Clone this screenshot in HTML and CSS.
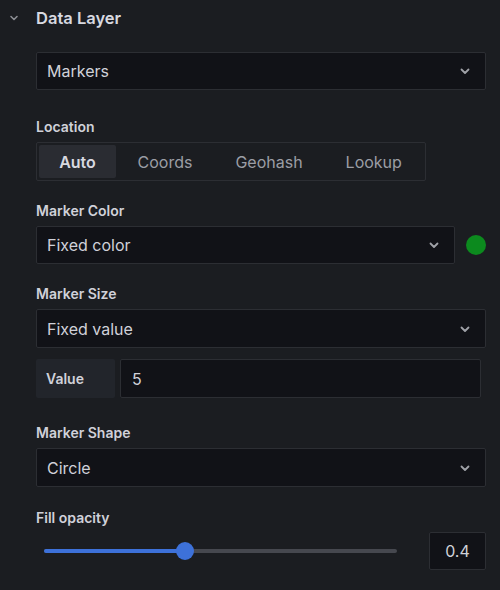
FILE: index.html
```html
<!DOCTYPE html>
<html>
<head>
<meta charset="utf-8">
<link rel="stylesheet" href="styles.css">
</head>
<body>
<div class="panel">
  <div class="header">
    <svg class="hchev" width="10" height="10" viewBox="0 0 10 10"><path d="M2 3.5 L5 6.5 L8 3.5" fill="none" stroke="#8b8d93" stroke-width="1.6" stroke-linecap="round" stroke-linejoin="round"/></svg>
    <span class="title">Data Layer</span>
  </div>
  <div class="content">
    <div class="select first">
      <span>Markers</span>
      <svg class="chev" width="12" height="12" viewBox="0 0 12 12"><path d="M2.5 4.5 L6 8 L9.5 4.5" fill="none" stroke="#a0a2a8" stroke-width="1.8" stroke-linecap="round" stroke-linejoin="round"/></svg>
    </div>

    <div class="field f-location">
      <div class="label">Location</div>
      <div class="radio">
        <div class="rb active">Auto</div>
        <div class="rb">Coords</div>
        <div class="rb">Geohash</div>
        <div class="rb">Lookup</div>
      </div>
    </div>

    <div class="field f-color">
      <div class="label">Marker Color</div>
      <div class="row">
        <div class="select grow">
          <span>Fixed color</span>
          <svg class="chev" width="12" height="12" viewBox="0 0 12 12"><path d="M2.5 4.5 L6 8 L9.5 4.5" fill="none" stroke="#a0a2a8" stroke-width="1.8" stroke-linecap="round" stroke-linejoin="round"/></svg>
        </div>
        <div class="dot"></div>
      </div>
    </div>

    <div class="field f-size">
      <div class="label">Marker Size</div>
      <div class="select tall">
        <span>Fixed value</span>
        <svg class="chev" width="12" height="12" viewBox="0 0 12 12"><path d="M2.5 4.5 L6 8 L9.5 4.5" fill="none" stroke="#a0a2a8" stroke-width="1.8" stroke-linecap="round" stroke-linejoin="round"/></svg>
      </div>
      <div class="valrow">
        <div class="vlabel">Value</div>
        <div class="vinput">5</div>
      </div>
    </div>

    <div class="field f-shape">
      <div class="label">Marker Shape</div>
      <div class="select tall">
        <span>Circle</span>
        <svg class="chev" width="12" height="12" viewBox="0 0 12 12"><path d="M2.5 4.5 L6 8 L9.5 4.5" fill="none" stroke="#a0a2a8" stroke-width="1.8" stroke-linecap="round" stroke-linejoin="round"/></svg>
      </div>
    </div>

    <div class="field f-opacity">
      <div class="label">Fill opacity</div>
      <div class="sliderrow">
        <div class="slider">
          <div class="track">
            <div class="fill" style="width:40%"></div>
            <div class="thumb" style="left:40%"></div>
          </div>
        </div>
        <div class="num">0.4</div>
      </div>
    </div>
  </div>
</div>
</body>
</html>
```

FILE: styles.css
```css
html, body {
  margin: 0;
  padding: 0;
  background: #1b1d21;
}
body {
  width: 500px;
  height: 590px;
  overflow: hidden;
  font-family: Inter, "Noto Sans", sans-serif;
  color: #d0d1d9;
}
.panel {
  display: flex;
  flex-direction: column;
}
.header {
  height: 36px;
  display: flex;
  align-items: center;
  padding-left: 9px;
}
.hchev {
  margin-right: 17px;
}
.title {
  font-size: 16.5px;
  font-weight: 600;
  color: #d8d9e0;
}
.content {
  padding: 0 14px 0 36px;
  display: flex;
  flex-direction: column;
}
.select {
  height: 38px;
  box-sizing: border-box;
  background: #111217;
  border: 1px solid #2c2e33;
  border-radius: 2px;
  display: flex;
  align-items: center;
  justify-content: space-between;
  padding: 0 14px 0 10px;
  font-size: 16px;
  color: #d0d1d9;
}
.select.first {
  margin-top: 16px;
}
.select.tall {
  height: 39px;
}
.label {
  height: 20px;
  line-height: 20px;
  font-size: 14px;
  font-weight: 600;
  color: #d0d1d9;
  margin-bottom: 5px;
}
.f-location { margin-top: 27px; }
.f-color { margin-top: 20px; }
.f-size { margin-top: 20px; }
.f-shape { margin-top: 25px; }
.f-opacity { margin-top: 21px; }

.radio {
  display: inline-flex;
  box-sizing: border-box;
  height: 39px;
  border: 1px solid #2c2e33;
  border-radius: 2px;
  padding: 2px;
}
.rb {
  padding: 0 21.5px;
  display: flex;
  align-items: center;
  font-size: 16px;
  color: #9b9da5;
  border-radius: 2px;
}
.rb.active {
  background: #2a2c32;
  color: #d8d9e0;
  font-weight: 600;
  padding: 0 20px;
  width: 37px;
  justify-content: center;
}
.row {
  display: flex;
  align-items: center;
}
.grow {
  width: 419px;
}
.dot {
  width: 20px;
  height: 20px;
  border-radius: 50%;
  background: #0c8a1e;
  margin-left: 11px;
}
.valrow {
  display: flex;
  margin-top: 11px;
  height: 39px;
}
.vlabel {
  width: 79px;
  box-sizing: border-box;
  background: #22252b;
  border-radius: 2px;
  display: flex;
  align-items: center;
  padding-left: 10px;
  font-size: 14px;
  font-weight: 600;
  color: #d0d1d9;
}
.vinput {
  margin-left: 5px;
  width: 361px;
  box-sizing: border-box;
  background: #111217;
  border: 1px solid #2c2e33;
  border-radius: 2px;
  display: flex;
  align-items: center;
  padding-left: 11px;
  font-size: 16px;
  color: #d0d1d9;
}
.sliderrow {
  display: flex;
  align-items: center;
  height: 38px;
  margin-top: -1px;
}
.slider {
  width: 392px;
  display: flex;
  align-items: center;
  padding-left: 8px;
}
.track {
  position: relative;
  width: 353px;
  height: 4px;
  border-radius: 2px;
  background: #46484f;
}
.fill {
  height: 4px;
  border-radius: 2px;
  background: #3d71d9;
}
.thumb {
  position: absolute;
  top: -7px;
  width: 18px;
  height: 18px;
  margin-left: -9px;
  border-radius: 50%;
  background: #3d71d9;
}
.num {
  width: 58px;
  height: 38px;
  box-sizing: border-box;
  background: #111217;
  border: 1px solid #2c2e33;
  border-radius: 2px;
  display: flex;
  align-items: center;
  justify-content: center;
  font-size: 16px;
  color: #d0d1d9;
}
```
